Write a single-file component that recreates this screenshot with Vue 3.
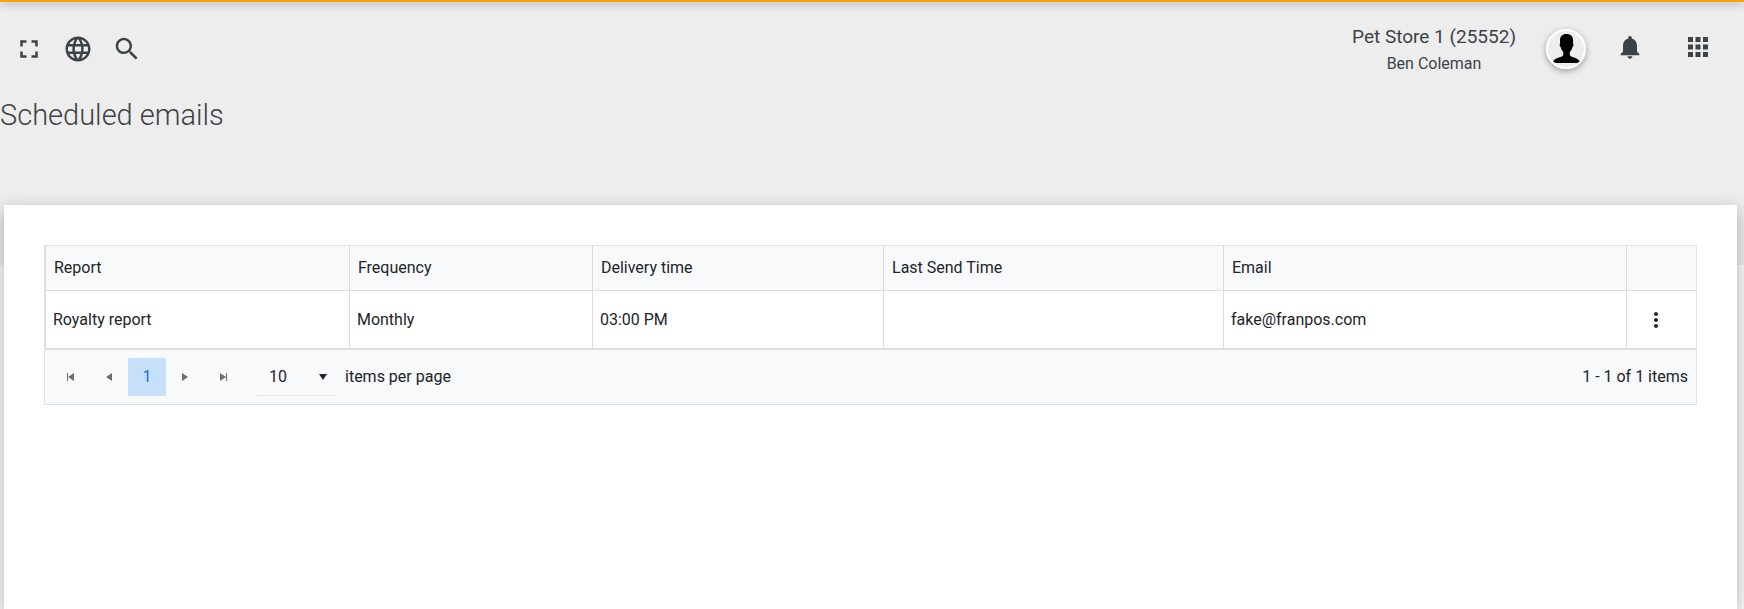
<script setup>
import { ref } from 'vue'

const store = { name: 'Pet Store 1 (25552)', user: 'Ben Coleman' }

const columns = [
  { key: 'report', title: 'Report' },
  { key: 'frequency', title: 'Frequency' },
  { key: 'delivery', title: 'Delivery time' },
  { key: 'lastSend', title: 'Last Send Time' },
  { key: 'email', title: 'Email' }
]

const rows = ref([
  { id: 1, report: 'Royalty report', frequency: 'Monthly', delivery: '03:00 PM', lastSend: '', email: 'fake@franpos.com' }
])

const pageSize = ref(10)
const pageSizes = [10, 20, 50]
</script>

<template>
  <div class="page">
    <div class="accent"></div>

    <header class="topbar">
      <div class="tools">
        <button type="button" class="icon-btn" aria-label="Full screen">
          <svg width="30" height="30" viewBox="0 0 24 24"><path d="M5 10h2V7h3V5H5zM5 14v5h5v-2H7v-3zM17 14v3h-3v2h5v-5zM14 5v2h3v3h2V5z" /></svg>
        </button>
        <button type="button" class="icon-btn" aria-label="Language">
          <svg width="30" height="30" viewBox="0 0 24 24"><path d="M11.99 2C6.47 2 2 6.48 2 12s4.47 10 9.99 10C17.52 22 22 17.52 22 12S17.52 2 11.99 2zm6.93 6h-2.95c-.32-1.25-.78-2.45-1.38-3.56 1.84.63 3.37 1.91 4.33 3.56zM12 4.04c.83 1.2 1.48 2.53 1.91 3.96h-3.82c.43-1.43 1.08-2.76 1.91-3.96zM4.26 14C4.1 13.36 4 12.69 4 12s.1-1.36.26-2h3.38c-.08.66-.14 1.32-.14 2s.06 1.34.14 2H4.26zm.82 2h2.95c.32 1.25.78 2.45 1.38 3.56-1.84-.63-3.37-1.9-4.33-3.56zm2.95-8H5.08c.96-1.66 2.49-2.93 4.33-3.56C8.81 5.55 8.35 6.75 8.03 8zM12 19.96c-.83-1.2-1.48-2.53-1.91-3.96h3.82c-.43 1.43-1.08 2.76-1.91 3.96zM14.34 14H9.66c-.09-.66-.16-1.32-.16-2s.07-1.35.16-2h4.68c.09.65.16 1.32.16 2s-.07 1.34-.16 2zm.25 5.56c.6-1.11 1.06-2.31 1.38-3.56h2.95c-.96 1.65-2.49 2.93-4.33 3.56zM16.36 14c.08-.66.14-1.32.14-2s-.06-1.34-.14-2h3.38c.16.64.26 1.31.26 2s-.1 1.36-.26 2h-3.38z" /></svg>
        </button>
        <button type="button" class="icon-btn" aria-label="Search">
          <svg width="30" height="30" viewBox="0 0 24 24"><path d="M15.5 14h-.79l-.28-.27C15.41 12.59 16 11.11 16 9.5 16 5.91 13.09 3 9.5 3S3 5.91 3 9.5 5.91 16 9.5 16c1.61 0 3.09-.59 4.23-1.57l.27.28v.79l5 4.99L20.49 19l-4.99-5zm-6 0C7.01 14 5 11.99 5 9.5S7.01 5 9.5 5 14 7.01 14 9.5 11.99 14 9.5 14z" /></svg>
        </button>
      </div>

      <div class="account">
        <div class="store">
          <div class="store-name">{{ store.name }}</div>
          <div class="store-user">{{ store.user }}</div>
        </div>
        <button type="button" class="avatar" aria-label="Profile">
          <svg width="36" height="36" viewBox="0 0 36 36">
            <path d="M18.500 3c4.200 0 6.800 2.600 6.600 6.800l-.1 2.700c.8.400.5 3-.5 3.600-.6 2.300-1.500 3.800-2.700 4.900v3.300c1.300 2.300 9 2.500 9.700 6.300-.4.900-1.600 1.400-3 1.400H8.800c-1.700 0-2.900-.4-3.500-1.400.8-3.800 8.700-4 10-6.300V21c-1.200-1.100-2.100-2.600-2.700-4.900-1-.6-1.300-3.200-.5-3.600L12 9.800C11.800 5.600 14.300 3 18.500 3z" />
          </svg>
        </button>
        <div class="shortcuts">
          <button type="button" class="icon-btn" aria-label="Notifications">
            <svg width="28" height="28" viewBox="0 0 24 24"><path d="M12 22c1.100 0 2-.9 2-2h-4c0 1.100.89 2 2 2zm6-6v-5c0-3.070-1.640-5.640-4.500-6.320V4c0-.83-.67-1.500-1.500-1.500s-1.500.67-1.500 1.500v.68C7.630 5.360 6 7.920 6 11v5l-2 2v1h16v-1l-2-2z" /></svg>
          </button>
          <button type="button" class="icon-btn" aria-label="Applications">
            <svg width="30" height="30" viewBox="0 0 24 24"><path d="M4 8h4V4H4v4zm6 12h4v-4h-4v4zm-6 0h4v-4H4v4zm0-6h4v-4H4v4zm6 0h4v-4h-4v4zm6-10v4h4V4h-4zm-6 4h4V4h-4v4zm6 6h4v-4h-4v4zm0 6h4v-4h-4v4z" /></svg>
          </button>
        </div>
      </div>
    </header>

    <h1 class="title">Scheduled emails</h1>

    <main class="card">
      <div class="grid">
        <table>
          <colgroup>
            <col class="col-report" />
            <col class="col-frequency" />
            <col class="col-delivery" />
            <col class="col-last" />
            <col class="col-email" />
            <col />
          </colgroup>
          <thead>
            <tr>
              <th v-for="col in columns" :key="col.key" scope="col">{{ col.title }}</th>
              <th></th>
            </tr>
          </thead>
          <tbody>
            <tr v-for="row in rows" :key="row.id">
              <td v-for="col in columns" :key="col.key">{{ row[col.key] }}</td>
              <td>
                <button type="button" class="more-btn" aria-label="Row actions">
                  <svg width="24" height="24" viewBox="0 0 24 24"><path d="M12 8c1.100 0 2-.9 2-2s-.9-2-2-2-2 .9-2 2 .9 2 2 2zm0 2c-1.100 0-2 .9-2 2s.9 2 2 2 2-.9 2-2-.9-2-2-2zm0 6c-1.100 0-2 .9-2 2s.9 2 2 2 2-.9 2-2-.9-2-2-2z" /></svg>
                </button>
              </td>
            </tr>
          </tbody>
        </table>

        <div class="pager">
          <button type="button" class="page-btn" aria-label="First page">
            <svg width="8" height="8" viewBox="0 0 8 8"><path d="M0 0h1v8H0zM7 0v8L1 4z" /></svg>
          </button>
          <button type="button" class="page-btn" aria-label="Previous page">
            <svg width="8" height="8" viewBox="0 0 8 8"><path d="M7 0v8L1 4z" /></svg>
          </button>
          <button type="button" class="page-btn active">1</button>
          <button type="button" class="page-btn" aria-label="Next page">
            <svg width="8" height="8" viewBox="0 0 8 8"><path d="M1 0v8l6-4z" /></svg>
          </button>
          <button type="button" class="page-btn" aria-label="Last page">
            <svg width="8" height="8" viewBox="0 0 8 8"><path d="M7 0h1v8H7zM1 0v8l6-4z" /></svg>
          </button>
          <label class="page-size">
            <span class="select-wrap">
              <select v-model="pageSize">
                <option v-for="size in pageSizes" :key="size" :value="size">{{ size }}</option>
              </select>
              <svg class="caret" width="8" height="6" viewBox="0 0 8 6"><path d="M0 0h8L4 6z" /></svg>
            </span>
            items per page
          </label>
          <span class="page-info">1 - {{ rows.length }} of {{ rows.length }} items</span>
        </div>
      </div>
    </main>
  </div>
</template>

<style>
body {
  margin: 0;
  background: #f5f5f5;
}
</style>

<style scoped>
.page {
  min-height: 100vh;
  display: flex;
  flex-direction: column;
  overflow: hidden;
  background: linear-gradient(#ededed 265px, #fafafa 265px);
  color: #3c4346;
  font-family: Roboto, "Liberation Sans", sans-serif;
  font-size: 16px;
  line-height: 24px;
}

.accent {
  height: 2px;
  background: #ffa000;
  box-shadow: 0 1px 8px rgba(0, 0, 0, 0.6);
}

button {
  padding: 0;
  border: none;
  background: none;
  color: inherit;
  font: inherit;
  cursor: pointer;
}

svg {
  display: block;
  fill: currentColor;
}

.topbar {
  display: flex;
  justify-content: space-between;
  align-items: center;
  height: 94px;
  padding: 0 31px 0 14px;
}

.tools {
  display: flex;
  gap: 19px;
}

.account {
  display: flex;
  align-items: center;
}

.store {
  margin-right: 30px;
  text-align: center;
}

.store-name {
  font-size: 19px;
  line-height: 30px;
}

.avatar {
  display: flex;
  align-items: center;
  justify-content: center;
  width: 40px;
  height: 40px;
  margin-right: 30px;
  border: 2px solid #fff;
  border-radius: 50%;
  box-shadow: 0 2px 6px rgba(0, 0, 0, 0.35);
  color: #000;
}

.shortcuts {
  display: flex;
  align-items: center;
  gap: 39px;
  padding-bottom: 4px;
}

.title {
  margin: 0;
  font-size: 29px;
  font-weight: 300;
  line-height: 38px;
}

.card {
  flex: 1;
  margin: 71px 7px 0 4px;
  padding: 40px;
  background: #fff;
  box-shadow: 0 5px 16px rgba(0, 0, 0, 0.3);
  color: #212529;
}

.grid {
  border: 1px solid #dee2e6;
}

table {
  width: 100%;
  table-layout: fixed;
  border-collapse: separate;
  border-spacing: 0;
}

.col-report {
  width: 18.41%;
}

.col-frequency {
  width: 14.72%;
}

.col-delivery {
  width: 17.63%;
}

.col-last {
  width: 20.59%;
}

.col-email {
  width: 24.41%;
}

th,
td {
  padding: 0 8px;
  border-left: 1px solid #dcdcde;
  border-bottom: 1px solid #dcdcde;
  text-align: left;
}

th {
  height: 44px;
  background: #f8f9fb;
  font-weight: 400;
}

td {
  height: 57px;
  padding: 0 7px;
}

.more-btn {
  display: block;
  width: 44px;
}

.more-btn svg {
  margin: 0 auto;
}

.pager {
  display: flex;
  align-items: center;
  padding: 8px 8px 8px 7px;
  border-top: 1px solid #dee2e6;
  background: #f8f9fb;
}

.page-btn {
  display: flex;
  align-items: center;
  justify-content: center;
  width: 38px;
  height: 38px;
  border-radius: 2px;
  color: #6c6e70;
}

.page-btn.active {
  background: #c6e0fa;
  color: #0d6efd;
}

.page-size {
  display: flex;
  align-items: center;
  gap: 8px;
  margin-left: 15px;
}

.select-wrap {
  position: relative;
}

select {
  display: block;
  width: 80px;
  height: 38px;
  padding: 0 12px;
  border: none;
  border-bottom: 1px solid #e2e4e7;
  background: transparent;
  color: inherit;
  font: inherit;
  appearance: none;
}

.caret {
  position: absolute;
  top: 16px;
  right: 10px;
  pointer-events: none;
}

.page-info {
  margin-left: auto;
}
</style>
